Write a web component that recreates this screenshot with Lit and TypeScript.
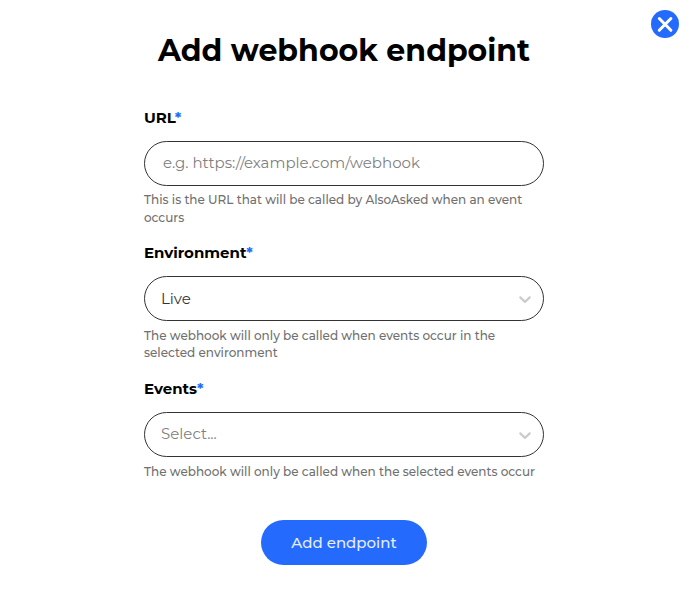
import { LitElement, html, css, svg } from "lit";
import { customElement } from "lit/decorators.js";

const chevron = svg`<path d="M4.516 7.548c0.436-0.446 1.043-0.481 1.576 0l3.908 3.747 3.908-3.747c0.533-0.481 1.141-0.446 1.574 0 0.436 0.445 0.408 1.197 0 1.615-0.406 0.418-4.695 4.502-4.695 4.502-0.217 0.223-0.502 0.335-0.787 0.335s-0.57-0.112-0.789-0.335c0 0-4.287-4.084-4.695-4.502s-0.436-1.17 0-1.615z"></path>`;

@customElement("app-root")
export class AppRoot extends LitElement {
  static styles = css`
    :host {
      display: block;
      position: relative;
      min-height: 605px;
      background: #fff;
      color: #000;
      font-family: Montserrat, Inter, "Open Sans", sans-serif;
      font-size: 15px;
    }
    * { box-sizing: border-box; }
    .close {
      position: absolute;
      top: 10px;
      right: 10px;
      width: 28px;
      height: 28px;
      padding: 0;
      border: 0;
      border-radius: 50%;
      background: #246bfd;
    }
    .close svg { display: block; }
    .dialog {
      display: flex;
      flex-direction: column;
      align-items: center;
      padding: 31px 1px 0 0;
    }
    h1 {
      margin: 0;
      font-size: 30px;
      line-height: 40px;
      font-weight: 700;
      white-space: nowrap;
    }
    form {
      width: 400px;
      margin-top: 36.8px;
      display: flex;
      flex-direction: column;
    }
    .label {
      height: 20px;
      margin-bottom: 13px;
      font-size: 15px;
      line-height: 20px;
      font-weight: 700;
      white-space: nowrap;
    }
    .star { color: #246bfd; }
    .control {
      display: flex;
      align-items: center;
      width: 400px;
      height: 45px;
      border: 1px solid #333;
      border-radius: 22.5px;
      padding: 0 8px 1.6px 16px;
      color: #333;
      font-weight: 400;
      white-space: nowrap;
    }
    .control svg { margin: 2px 0 0 auto; fill: #ccc; }
    input.control { padding: 0 18px 2px; font: inherit; outline: 0; background: #fff; }
    input::placeholder { color: #808080; opacity: 1; }
    .empty { color: #808080; }
    .help {
      margin: 5.65px 0 0;
      font-size: 12px;
      line-height: 17.5px;
      font-weight: 500;
      color: #707070;
      white-space: nowrap;
    }
    .field + .field { margin-top: 16.9px; }
    .submit {
      align-self: center;
      margin-top: 39.95px;
      width: 166px;
      height: 45px;
      padding: 0;
      border: 0;
      border-radius: 22.5px;
      background: #246bfd;
      color: #e6eeff;
      font: inherit;
      font-weight: 500;
      white-space: nowrap;
    }
  `;

  render() {
    return html`
      <button class="close" aria-label="Close">
        <svg width="28" height="28" viewBox="0 0 28 28"><path d="M8.3 8.5 19.9 20.3M19.9 8.5 8.3 20.3" stroke="#fff" stroke-width="3" stroke-linecap="round"></path></svg>
      </button>
      <div class="dialog">
        <h1>Add webhook endpoint</h1>
        <form>
          <div class="field">
            <div class="label">URL<span class="star">*</span></div>
            <input class="control" placeholder="e.g. https://example.com/webhook" />
            <p class="help">This is the URL that will be called by AlsoAsked when an event<br />occurs</p>
          </div>
          <div class="field">
            <div class="label">Environment<span class="star">*</span></div>
            <div class="control"><span>Live</span><svg width="20" height="20" viewBox="0 0 20 20">${chevron}</svg></div>
            <p class="help">The webhook will only be called when events occur in the<br />selected environment</p>
          </div>
          <div class="field">
            <div class="label">Events<span class="star">*</span></div>
            <div class="control"><span class="empty">Select...</span><svg width="20" height="20" viewBox="0 0 20 20">${chevron}</svg></div>
            <p class="help">The webhook will only be called when the selected events occur</p>
          </div>
          <button class="submit" type="button">Add endpoint</button>
        </form>
      </div>
    `;
  }
}
